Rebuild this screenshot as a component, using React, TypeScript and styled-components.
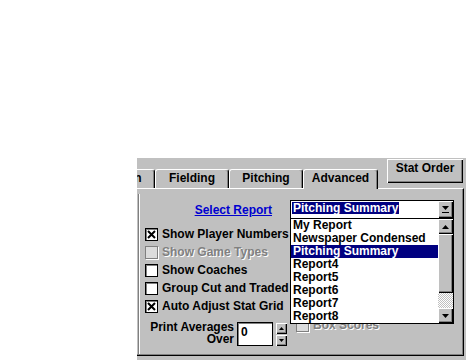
import React from "react";
import styled, { createGlobalStyle, css } from "styled-components";

const GlobalStyle = createGlobalStyle`
  body {
    margin: 0;
    background: #fff;
  }
  * {
    box-sizing: border-box;
  }
`;

const raised = css`
  background: #c0c0c0;
  box-shadow: inset 1px 1px 0 #fff, inset -1px -1px 0 #000,
    inset -2px -2px 0 #808080;
`;

const Page = styled.div`
  padding: 158px 0 0 137px;
`;

const Window = styled.div`
  width: 329px;
  height: 202px;
  background: #c0c0c0;
  overflow: hidden;
  color: #000;
  font-family: "Liberation Sans", Arial, sans-serif;
  font-size: 12px;
  font-weight: 700;
`;

const Header = styled.div`
  display: flex;
  height: 30px;
`;

const TabRow = styled.div`
  display: flex;
  align-items: flex-end;
  margin-left: -56px;
`;

const Tab = styled.div<{ $w: number; $active?: boolean }>`
  position: relative;
  z-index: ${(p) => (p.$active ? 1 : 0)};
  width: ${(p) => p.$w}px;
  height: ${(p) => (p.$active ? 20 : 19)}px;
  margin-bottom: ${(p) => (p.$active ? -1 : 0)}px;
  border-top: 1px solid #fff;
  border-left: 1px solid #fff;
  border-right: 1px solid #000;
  border-radius: 3px 3px 0 0;
  box-shadow: inset -1px 0 0 #808080;
  background: #c0c0c0;
  text-align: center;
  line-height: 17px;
  white-space: nowrap;
`;

const StatButton = styled.div`
  ${raised}
  margin: 1px 0 0 9px;
  width: 76px;
  height: 24px;
  line-height: 19px;
  text-align: center;
`;

const Panel = styled.div`
  display: flex;
  width: 327px;
  height: 168px;
  border-top: 1px solid #fff;
  border-right: 1px solid #000;
  border-bottom: 1px solid #000;
  box-shadow: inset -1px -1px 0 #808080;
`;

const EtchedEdge = styled.div`
  margin: 5px 0 1px 1px;
  width: 2px;
  border-left: 1px solid #808080;
  border-right: 1px solid #fff;
`;

const Content = styled.div`
  flex: 1;
  padding: 11px 0 0 5px;
`;

const SelectRow = styled.div`
  display: flex;
  align-items: center;
  height: 19px;
`;

const SelectLabel = styled.div`
  width: 127px;
  margin-right: 18px;
  text-align: right;
  color: #0000d0;
  text-decoration: underline;
`;

const Combo = styled.div`
  position: relative;
  z-index: 2;
  display: flex;
  width: 164px;
  height: 19px;
  border: 1px solid #000;
  background: #fff;
`;

const ComboText = styled.div`
  margin: 1px 0 0 1px;
  height: 12px;
  padding: 0 1px;
  line-height: 12px;
  background: #000080;
  color: #fff;
  white-space: nowrap;
`;

const ArrowButton = styled.div<{ $h: number }>`
  ${raised}
  width: 15px;
  height: ${(p) => p.$h}px;
  display: flex;
  align-items: center;
  justify-content: center;
  flex-shrink: 0;
`;

const ComboButton = styled(ArrowButton)`
  margin-left: auto;
`;

const DropList = styled.div`
  position: absolute;
  top: 18px;
  left: -1px;
  width: 164px;
  height: 105px;
  display: flex;
  background: #fff;
  border: 1px solid #000;
  border-top: none;
`;

const Items = styled.div`
  flex: 1;
  display: flex;
  flex-direction: column;
`;

const Item = styled.div<{ $active?: boolean }>`
  height: 13px;
  line-height: 13px;
  padding-left: 2px;
  white-space: nowrap;
  background: ${(p) => (p.$active ? "#000080" : "transparent")};
  color: ${(p) => (p.$active ? "#fff" : "#000")};
`;

const ScrollBar = styled.div`
  width: 15px;
  display: flex;
  flex-direction: column;
`;

const Thumb = styled.div`
  ${raised}
  height: 59px;
`;

const Track = styled.div`
  flex: 1;
  background: repeating-conic-gradient(#c0c0c0 0 25%, #fff 0 50%) 0 0 / 2px
    2px;
`;

const Body = styled.div`
  margin-top: 6px;
  display: grid;
  grid-template-columns: 145px 1fr;
  grid-auto-rows: 18px;
`;

const CheckRow = styled.div<{
  $disabled?: boolean;
  $col?: number;
  $row?: number;
}>`
  display: flex;
  align-items: center;
  gap: 4px;
  grid-column: ${(p) => p.$col ?? 1};
  ${(p) => p.$row && `grid-row: ${p.$row};`}
  padding-left: ${(p) => (p.$col === 2 ? 6 : 0)}px;
  margin-top: ${(p) => (p.$col === 2 ? 2 : 0)}px;
  white-space: nowrap;
  color: ${(p) => (p.$disabled ? "#808080" : "#000")};
  text-shadow: ${(p) => (p.$disabled ? "1px 1px 0 #fff" : "none")};
`;

const Box = styled.div<{ $disabled?: boolean }>`
  width: 13px;
  height: 13px;
  flex-shrink: 0;
  display: flex;
  align-items: center;
  justify-content: center;
  border: 1px solid ${(p) => (p.$disabled ? "#808080" : "#000")};
  background: ${(p) => (p.$disabled ? "#dcdcdc" : "#fff")};
  box-shadow: ${(p) =>
    p.$disabled ? "1px 1px 0 #fff" : "inset 1px 1px 0 #808080"};
`;

const PrintRow = styled.div`
  grid-column: 1;
  grid-row: 6 / span 2;
  margin-top: 7px;
  display: flex;
  align-items: flex-start;
`;

const PrintLabel = styled.div`
  width: 89px;
  margin-top: -1px;
  text-align: right;
  line-height: 12px;
`;

const NumberInput = styled.div`
  margin-left: 3px;
  width: 36px;
  height: 24px;
  padding: 2px 3px;
  line-height: 14px;
  background: #fff;
  border: 1px solid #000;
  box-shadow: inset 1px 1px 0 #808080;
`;

const Spinner = styled.div`
  margin: 1px 0 0 3px;
  display: flex;
  flex-direction: column;
  gap: 1px;
`;

const SpinButton = styled.div`
  ${raised}
  width: 11px;
  height: 11px;
  display: flex;
  align-items: center;
  justify-content: center;
`;

function Arrow({ up, bar }: { up?: boolean; bar?: boolean }) {
  return (
    <svg width="7" height={bar ? 7 : 4} viewBox={`0 0 7 ${bar ? 7 : 4}`}>
      <polygon
        points={up ? "3.5,0 7,4 0,4" : "0,0 7,0 3.5,4"}
        fill="#000"
      />
      {bar && <rect x="0" y="6" width="7" height="1" fill="#000" />}
    </svg>
  );
}

function SmallArrow({ up }: { up?: boolean }) {
  return (
    <svg width="5" height="3" viewBox="0 0 5 3">
      <polygon points={up ? "2.5,0 5,3 0,3" : "0,0 5,0 2.5,3"} fill="#000" />
    </svg>
  );
}

function Check({
  label,
  checked,
  disabled,
  col,
  row,
}: {
  label: string;
  checked?: boolean;
  disabled?: boolean;
  col?: number;
  row?: number;
}) {
  return (
    <CheckRow $disabled={disabled} $col={col} $row={row}>
      <Box $disabled={disabled}>
        {checked && (
          <svg width="9" height="9" viewBox="0 0 9 9">
            <path d="M1 1 L8 8 M8 1 L1 8" stroke="#000" strokeWidth="2" />
          </svg>
        )}
      </Box>
      {label}
    </CheckRow>
  );
}

const reports = [
  "My Report",
  "Newspaper Condensed",
  "Pitching Summary",
  "Report4",
  "Report5",
  "Report6",
  "Report7",
  "Report8",
];

export default function App() {
  return (
    <Page>
      <GlobalStyle />
      <Window>
        <Header>
          <TabRow>
            <Tab $w={74}>Position</Tab>
            <Tab $w={74}>Fielding</Tab>
            <Tab $w={74}>Pitching</Tab>
            <Tab $w={75} $active>
              Advanced
            </Tab>
          </TabRow>
          <StatButton>Stat Order</StatButton>
        </Header>
        <Panel>
          <EtchedEdge />
          <Content>
            <SelectRow>
              <SelectLabel>Select Report</SelectLabel>
              <Combo>
                <ComboText>Pitching Summary</ComboText>
                <ComboButton $h={17}>
                  <Arrow bar />
                </ComboButton>
                <DropList>
                  <Items>
                    {reports.map((r) => (
                      <Item key={r} $active={r === "Pitching Summary"}>
                        {r}
                      </Item>
                    ))}
                  </Items>
                  <ScrollBar>
                    <ArrowButton $h={15}>
                      <Arrow up />
                    </ArrowButton>
                    <Thumb />
                    <Track />
                    <ArrowButton $h={15}>
                      <Arrow />
                    </ArrowButton>
                  </ScrollBar>
                </DropList>
              </Combo>
            </SelectRow>
            <Body>
              <Check label="Show Player Numbers" checked />
              <Check label="Show Game Types" disabled />
              <Check label="Show Coaches" />
              <Check label="Group Cut and Traded" />
              <Check label="Auto Adjust Stat Grid" checked />
              <PrintRow>
                <PrintLabel>
                  Print Averages
                  <br />
                  Over
                </PrintLabel>
                <NumberInput>0</NumberInput>
                <Spinner>
                  <SpinButton>
                    <SmallArrow up />
                  </SpinButton>
                  <SpinButton>
                    <SmallArrow />
                  </SpinButton>
                </Spinner>
              </PrintRow>
              <Check label="Box Scores" disabled col={2} row={6} />
            </Body>
          </Content>
        </Panel>
      </Window>
    </Page>
  );
}
